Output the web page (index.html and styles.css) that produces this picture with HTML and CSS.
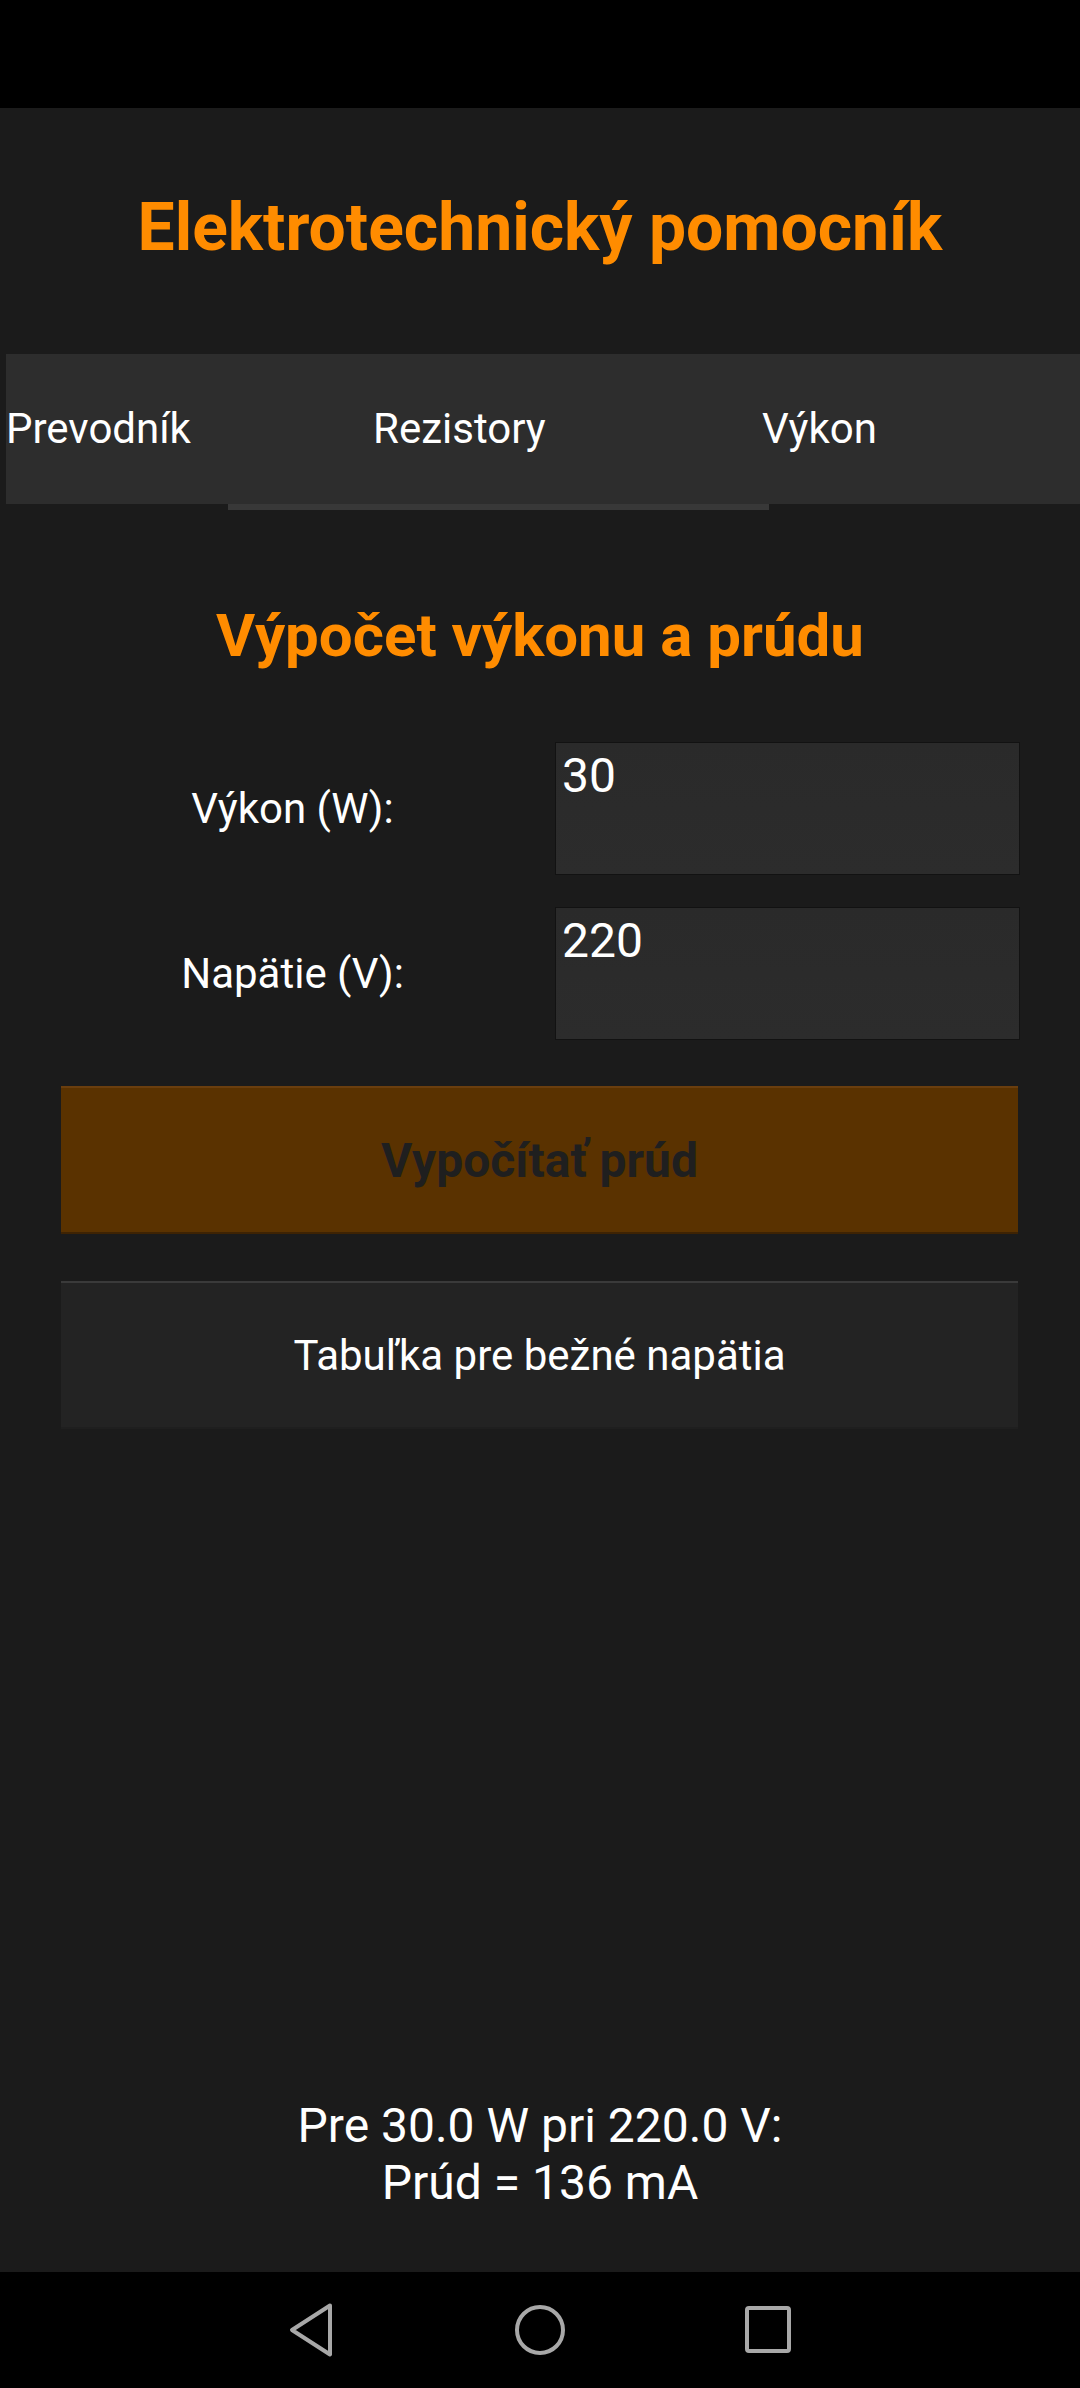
FILE: index.html
```html
<!DOCTYPE html>
<html lang="sk">
<head>
<meta charset="utf-8">
<title>Elektrotechnický pomocník</title>
<link rel="stylesheet" href="styles.css">
</head>
<body>
<div class="screen">
  <div class="status-bar"></div>
  <main class="app">
    <h1 class="app-title">Elektrotechnický pomocník</h1>
    <nav class="tabs">
      <div class="tab tab-first">Prevodník</div>
      <div class="tab tab-second">Rezistory</div>
      <div class="tab tab-third">Výkon</div>
    </nav>
    <div class="tab-indicator"></div>

    <h2 class="section-title">Výpočet výkonu a prúdu</h2>

    <div class="form">
      <label class="field-label">Výkon (W):</label>
      <div class="field-input">30</div>
      <label class="field-label">Napätie (V):</label>
      <div class="field-input">220</div>
    </div>

    <div class="btn btn-primary">Vypočítať prúd</div>
    <div class="btn btn-secondary">Tabuľka pre bežné napätia</div>

    <div class="spacer"></div>

    <div class="result">
      <div>Pre 30.0 W pri 220.0 V:</div>
      <div>Prúd = 136 mA</div>
    </div>
  </main>
  <div class="nav-bar">
    <svg class="nav-icon" width="60" height="60" viewBox="0 0 60 60">
      <path d="M48 5.5 L10 30 L48 54.5 Z" fill="none" stroke="#a8a8a8" stroke-width="4" stroke-linejoin="round"/>
    </svg>
    <svg class="nav-icon" width="60" height="60" viewBox="0 0 60 60">
      <circle cx="30" cy="30" r="23" fill="none" stroke="#a8a8a8" stroke-width="4"/>
    </svg>
    <svg class="nav-icon" width="60" height="60" viewBox="0 0 60 60">
      <rect x="9" y="8" width="42" height="43" rx="2" fill="none" stroke="#a8a8a8" stroke-width="4"/>
    </svg>
  </div>
</div>
</body>
</html>
```

FILE: styles.css
```css
* { box-sizing: border-box; }

html, body {
  margin: 0;
  padding: 0;
  background: #1b1b1b;
}

body {
  font-family: Roboto, "Noto Sans", "Liberation Sans", sans-serif;
  color: #ffffff;
}

.screen {
  width: 1080px;
  height: 2388px;
  display: flex;
  flex-direction: column;
  overflow: hidden;
}

.status-bar {
  height: 108px;
  background: #000000;
  flex: none;
}

.app {
  flex: 1;
  display: flex;
  flex-direction: column;
  background: #1b1b1b;
}

.app-title {
  margin: 80px 0 0 0;
  height: 80px;
  line-height: 80px;
  font-size: 66px;
  font-weight: 700;
  color: #ff8c00;
  text-align: center;
}

.tabs {
  margin: 86px 0 0 6px;
  height: 150px;
  background: #2d2d2d;
  display: flex;
  align-items: center;
  padding-left: 0;
  font-size: 42px;
  line-height: 50px;
  color: #ffffff;
}

.tab { white-space: nowrap; }
.tab-first { width: 367px; }
.tab-second { width: 389px; }
.tab-third { flex: 1; }

.tab-indicator {
  margin-left: 228px;
  width: 541px;
  height: 6px;
  background: #383838;
}

.section-title {
  margin: 91px 0 0 0;
  height: 70px;
  line-height: 70px;
  font-size: 60px;
  font-weight: 700;
  color: #ff8c00;
  text-align: center;
}

.form {
  margin: 71px 60px 0 60px;
  display: grid;
  grid-template-columns: 465px 465px;
  column-gap: 30px;
  row-gap: 32px;
  align-items: center;
}

.field-label {
  font-size: 42px;
  text-align: center;
  line-height: 50px;
}

.field-input {
  height: 133px;
  background: linear-gradient(#2a2a2a, #2c2c2c);
  border: 1px solid #121212;
  padding: 4px 6px;
  font-size: 48px;
  line-height: 57px;
}

.btn {
  margin: 0 62px 0 61px;
  height: 148px;
  display: flex;
  align-items: center;
  justify-content: center;
}

.btn-primary {
  margin-top: 46px;
  background: #5a3200;
  border-top: 2px solid #6a3e0e;
  border-bottom: 2px solid #3e2303;
  color: #1f1f1f;
  font-size: 48px;
  font-weight: 700;
}

.btn-secondary {
  margin-top: 47px;
  background: #232323;
  border-top: 2px solid #3a3a3a;
  border-bottom: 2px solid #1f1f1f;
  color: #ffffff;
  font-size: 42px;
}

.spacer { flex: 1; }

.result {
  margin-bottom: 61px;
  text-align: center;
  font-size: 48px;
  line-height: 57px;
  color: #ffffff;
}

.nav-bar {
  height: 116px;
  flex: none;
  background: #000000;
  display: flex;
  justify-content: center;
  align-items: center;
  gap: 168px;
}

.nav-icon { display: block; }
```
